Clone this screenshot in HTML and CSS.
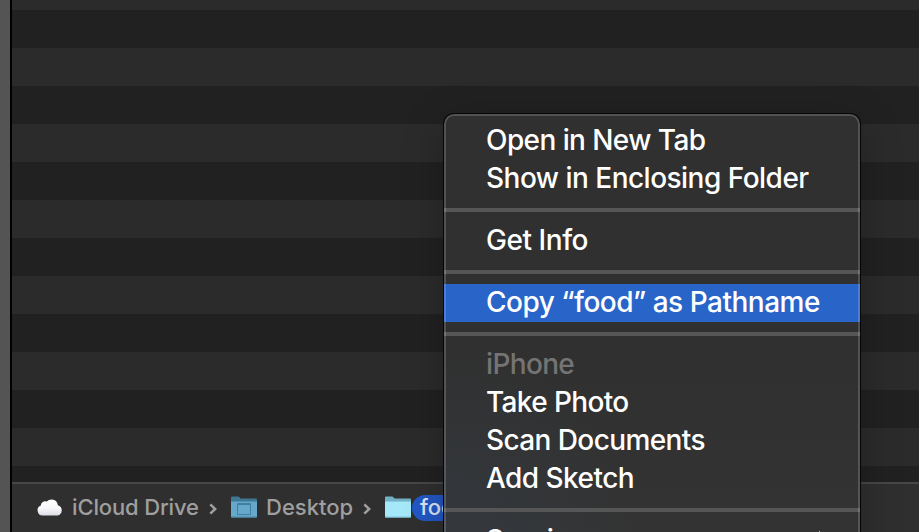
FILE: index.html
```html
<!DOCTYPE html>
<html lang="en">
<head>
<meta charset="utf-8">
<title>Finder</title>
<link rel="stylesheet" href="styles.css">
</head>
<body>
<div class="window">
  <div class="list"></div>
  <footer class="pathbar">
    <svg class="cloud" width="26" height="19" viewBox="0 0 26 19">
      <defs><linearGradient id="cg" x1="0" y1="0" x2="0" y2="1"><stop offset="0" stop-color="#fff"/><stop offset=".55" stop-color="#f8f8fb"/><stop offset="1" stop-color="#d9dce3"/></linearGradient></defs>
      <path fill="url(#cg)" d="M5.500 17.500A5.200 5.200 0 0 1 3.800 7.500A4.300 4.300 0 0 1 9.800 3.600A6.300 6.300 0 0 1 20.800 7.200A5.300 5.300 0 0 1 20.500 17.500Z"/>
    </svg>
    <span class="crumb c1">iCloud Drive</span>
    <svg class="chev" width="8" height="12" viewBox="0 0 8 12"><path d="M1.300 1.300 6.200 6 1.300 10.700"/></svg>
    <svg class="folder desk" width="26" height="22" viewBox="0 0 26 22">
      <path fill="#3f7895" d="M0 1.500Q0 .5 1 .5H7Q8 .5 8.600 1.500T10 2.500H25Q26 2.500 26 3.500V8H0Z"/>
      <path fill="#65a8c9" d="M0 5.500H26V20.500Q26 21.500 25 21.500H1Q0 21.500 0 20.500Z"/>
      <path fill="#4a86a6" d="M0 20.500H26V21.500H0Z"/>
      <path fill="none" stroke="#3f7fa3" d="M6.500 7.500H19.500V18.500H6.500ZM6.500 8.500H19.500"/>
    </svg>
    <span class="crumb c2">Desktop</span>
    <svg class="chev" width="8" height="12" viewBox="0 0 8 12"><path d="M1.300 1.300 6.200 6 1.300 10.700"/></svg>
    <svg class="folder food" width="26" height="22" viewBox="0 0 26 22">
      <path fill="#75b1c4" d="M0 1.500Q0 .5 1 .5H7Q8 .5 8.600 1.500T10 2.500H25Q26 2.500 26 3.500V8H0Z"/>
      <path fill="#a4e8fa" d="M0 5.500H26V20.500Q26 21.500 25 21.500H1Q0 21.500 0 20.500Z"/>
      <path fill="#80c3d6" d="M0 20.500H26V21.500H0Z"/>
    </svg>
    <span class="pill">food</span>
  </footer>
</div>
<nav class="menu">
  <div class="item"><span class="t1">Open in New Tab</span></div>
  <div class="item"><span class="t2">Show in Enclosing Folder</span></div>
  <div class="sep"></div>
  <div class="item"><span class="t3">Get Info</span></div>
  <div class="sep"></div>
  <div class="item selected"><span class="t4">Copy “food” as Pathname</span></div>
  <div class="sep"></div>
  <div class="item disabled"><span class="t5">iPhone</span></div>
  <div class="item"><span class="t6">Take Photo</span></div>
  <div class="item"><span class="t7">Scan Documents</span></div>
  <div class="item"><span class="t8">Add Sketch</span></div>
  <div class="sep"></div>
  <div class="item more"><span class="t9">Services</span><svg width="14" height="20" viewBox="0 0 14 20"><path fill="#fff" d="M1 0 14 10 1 20Z"/></svg></div>
</nav>
</body>
</html>
```
FILE: styles.css
```css
* { box-sizing: border-box; }
body {
  margin: 0;
  width: 919px;
  height: 532px;
  overflow: hidden;
  position: relative;
  background: #545454;
  font-family: Inter, "Liberation Sans", sans-serif;
}
.window {
  margin-left: 10px;
  height: 532px;
  border-left: 2px solid #000;
  display: flex;
  flex-direction: column;
}
.list {
  height: 482px;
  background: repeating-linear-gradient(#212121 0 38px, #2b2b2b 38px 76px) 0 -66px;
  background-size: 100% 760px;
}
.pathbar {
  height: 50px;
  background: #2f2f2f;
  border-top: 2px solid #474747;
  display: flex;
  align-items: center;
  padding: 0 0 2px 25px;
  color: #9f9f9f;
  font-size: 22px;
  font-weight: 500;
  white-space: nowrap;
}
.cloud { flex: none; margin-right: 9px; margin-top: 1px; }
.crumb { flex: none; line-height: 30px; }
.c1 { width: 137px; letter-spacing: -.15px; }
.c2 { width: 97px; }
.chev {
  flex: none;
  margin-top: 3px;
  fill: none;
  stroke: #9f9f9f;
  stroke-width: 2.5;
}
.folder { flex: none; }
.desk { margin: 0 9px 0 14px; }
.food { margin: 0 1px 0 14px; }
.pill {
  flex: none;
  height: 26px;
  line-height: 25px;
  margin-top: 2px;
  padding: 0 8px;
  border-radius: 13px;
  background: #2257c5;
  color: #dce4f5;
}
.menu {
  position: absolute;
  left: 444px;
  top: 114px;
  width: 416px;
  height: 454px;
  padding-top: 8px;
  border-radius: 10px;
  overflow: hidden;
  background: radial-gradient(ellipse 200px 220px at 0 100%, #33383e, rgba(51, 56, 62, 0)), linear-gradient(#303030 0 50%, #343434);
  color: #fff;
  font-size: 28px;
  font-weight: 500;
  box-shadow: 0 0 0 1px #050505, 0 10px 40px rgba(0, 0, 0, .25);
}
.menu::after {
  content: "";
  position: absolute;
  inset: 0;
  border: 2px solid rgba(255, 255, 255, .17);
  border-radius: 10px;
}
.item {
  height: 38px;
  line-height: 37px;
  padding-left: 42px;
  white-space: nowrap;
}
.more {
  display: flex;
  justify-content: space-between;
  padding-right: 28px;
}
.more svg { margin-top: 9px; }
.t1 { letter-spacing: -.58px; }
.t2 { letter-spacing: -.52px; }
.t3 { letter-spacing: -.45px; }
.t4 { letter-spacing: -.5px; }
.t5 { letter-spacing: -.65px; }
.t6 { letter-spacing: -.63px; }
.t7 { letter-spacing: -.6px; }
.t8 { letter-spacing: -.55px; }
.t9 { letter-spacing: -.3px; }
.selected { background: #2964c9; }
.disabled { color: #747474; }
.sep {
  height: 24px;
  padding: 10px 0;
}
.sep::before {
  content: "";
  display: block;
  height: 4px;
  background: #565656;
}
```
